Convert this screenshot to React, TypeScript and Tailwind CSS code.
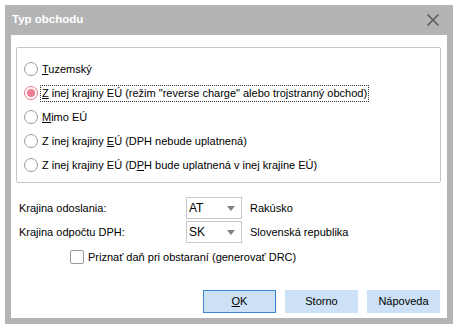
import { X } from "lucide-react";

const font = "font-['Tahoma','Liberation_Sans',sans-serif]";

function Radio({ checked, children, focus }: { checked?: boolean; children: React.ReactNode; focus?: boolean }) {
  return (
    <div className="h-[24px] flex items-center">
      <span
        className={
          "w-[14px] h-[14px] rounded-full border flex items-center justify-center shrink-0 " +
          (checked ? "border-[#e8788a] bg-white" : "border-[#9a9a9a] bg-white")
        }
      >
        {checked && <span className="w-[8px] h-[8px] rounded-full bg-[#f07e92]" />}
      </span>
      <span
        className={
          "ml-[3px] px-[1px] leading-[15px] " + (focus ? "outline outline-1 outline-dotted outline-[#333]" : "")
        }
      >
        {children}
      </span>
    </div>
  );
}

function Combo({ value }: { value: string }) {
  return (
    <div className="w-[56px] h-[22px] border border-[#c8c8c8] bg-white flex items-center pl-[2px] pr-[6px]">
      <span className="flex-1 text-[12px]">{value}</span>
      <svg width="8" height="5" viewBox="0 0 8 5">
        <path d="M0 0H8L4 5Z" fill="#808080" />
      </svg>
    </div>
  );
}

function Btn({ children, primary }: { children: React.ReactNode; primary?: boolean }) {
  return (
    <div
      className={
        "w-[73px] h-[23px] flex items-center justify-center bg-[#cce1f5] border " +
        (primary ? "border-[#3d86d2]" : "border-[#cce1f5]")
      }
    >
      {children}
    </div>
  );
}

export default function App() {
  return (
    <div className={"w-[458px] h-[329px] bg-white pt-[5px] pl-[5px] text-[11px] text-black " + font}>
      <div className="w-[448px] h-[319px] bg-[#b4b4b4] flex flex-col">
        <div className="h-[30px] flex items-center justify-between pl-[7px] pr-[10px]">
          <span className="text-white font-bold text-[11.5px]">Typ obchodu</span>
          <X className="w-[20px] h-[20px] text-[#5c5c5c]" strokeWidth={2} />
        </div>
        <div className="flex-1 mx-[6px] mb-[6px] bg-white flex flex-col pt-[12px] pl-[5px] pr-[6px]">
          <div className="h-[136px] border border-[#c6c6c6] rounded-[2px] pl-[7px] pt-[9px]">
            <Radio>
              <u>T</u>uzemský
            </Radio>
            <Radio checked focus>
              <u>Z</u> inej krajiny EÚ (režim "reverse charge" alebo trojstranný obchod)
            </Radio>
            <Radio>
              <u>M</u>imo EÚ
            </Radio>
            <Radio>
              Z inej krajiny <u>E</u>Ú (DPH nebude uplatnená)
            </Radio>
            <Radio>
              Z inej krajiny EÚ (D<u>P</u>H bude uplatnená v inej krajine EÚ)
            </Radio>
          </div>
          <div className="mt-[14px] pl-[3px] flex flex-col gap-[2px]">
            <div className="flex items-center h-[22px]">
              <span className="w-[167px]">Krajina odoslania:</span>
              <Combo value="AT" />
              <span className="ml-[8px]">Rakúsko</span>
            </div>
            <div className="flex items-center h-[22px]">
              <span className="w-[167px]">Krajina odpočtu DPH:</span>
              <Combo value="SK" />
              <span className="ml-[8px]">Slovenská republika</span>
            </div>
            <div className="flex items-center h-[24px] pl-[51px]">
              <span className="w-[14px] h-[14px] border border-[#9a9a9a] rounded-[2px] bg-white" />
              <span className="ml-[4px]">Priznať daň pri obstaraní (generovať DRC)</span>
            </div>
          </div>
          <div className="mt-auto mb-[5px] flex justify-end gap-[9px] pr-[1px]">
            <Btn primary>
              <u>O</u>K
            </Btn>
            <Btn>Storno</Btn>
            <Btn>Nápoveda</Btn>
          </div>
        </div>
      </div>
    </div>
  );
}
